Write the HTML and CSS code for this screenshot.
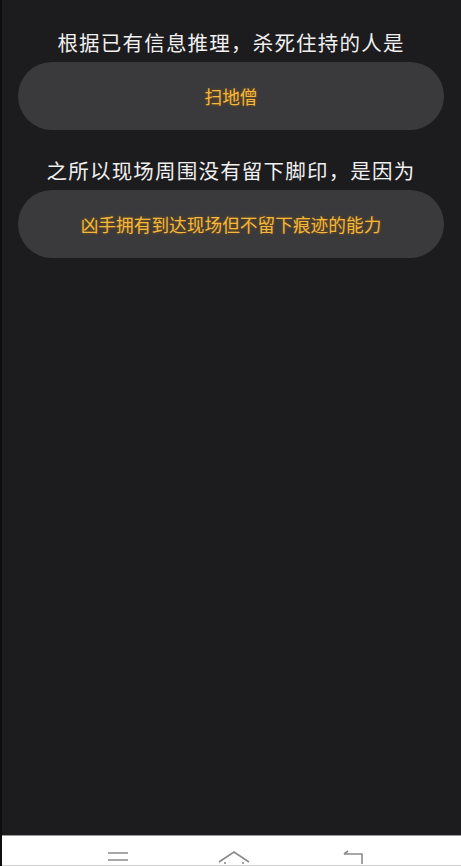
FILE: index.html
```html
<!DOCTYPE html>
<html lang="zh-CN">
<head>
    <meta charset="UTF-8">
    <meta name="viewport" content="width=device-width, initial-scale=1.0">
    <title>推理</title>
    <link rel="stylesheet" href="styles.css">
</head>
<body>

<div class="screen">
    <div class="content">
        <div class="question">根据已有信息推理，杀死住持的人是</div>
        <div class="answer">扫地僧</div>

        <div class="question second">之所以现场周围没有留下脚印，是因为</div>
        <div class="answer">凶手拥有到达现场但不留下痕迹的能力</div>
    </div>

    <div class="nav-bar">
        <svg class="nav-icon menu" width="24" height="14" viewBox="0 0 24 14">
            <path d="M2 3 H22 M2 10 H22" stroke="#8a8a8a" stroke-width="1.6" fill="none"/>
        </svg>
        <svg class="nav-icon home" width="34" height="14" viewBox="0 0 34 14">
            <path d="M2 12 L17 2 L32 12" stroke="#8a8a8a" stroke-width="1.6" fill="none"/>
            <path d="M8 14 V12 M26 14 V12" stroke="#8a8a8a" stroke-width="1.6" fill="none"/>
        </svg>
        <svg class="nav-icon back" width="24" height="14" viewBox="0 0 24 14">
            <path d="M2 4 H20 V14 M2 4 L6 1" stroke="#8a8a8a" stroke-width="1.6" fill="none"/>
        </svg>
    </div>
</div>

</body>
</html>
```

FILE: styles.css
```css
body {
    margin: 0;
    padding: 0;
    background-color: #1c1b1e;
    font-family: "Noto Sans CJK SC", "Noto Sans", sans-serif;
}
.screen {
    height: 866px;
    display: flex;
    flex-direction: column;
    border-left: 2px solid #0e0e0f;
    box-sizing: border-box;
    overflow: hidden;
}
.content {
    flex: 1;
    padding: 22px 17px 0 16px;
}
.question {
    height: 40px;
    line-height: 40px;
    text-align: center;
    color: #f0f0f0;
    font-size: 20.5px;
    letter-spacing: 1.2px;
    white-space: nowrap;
}
.question.second {
    margin-top: 20px;
}
.answer {
    height: 68px;
    border-radius: 34px;
    background-color: #3a3a3c;
    display: flex;
    align-items: center;
    justify-content: center;
    color: #f2b840;
    font-size: 17.7px;
    text-shadow: 0 0 3px rgba(150, 90, 0, 0.9);
}
.nav-bar {
    height: 31px;
    background-color: #ffffff;
    border-top: 1px solid #9a9a9a;
    border-bottom: 1px solid #d0d0d0;
    box-sizing: border-box;
    display: flex;
    align-items: flex-end;
    padding-left: 104px;
}
.nav-icon {
    display: block;
    margin-bottom: 1px;
}
.nav-icon.home {
    margin-left: 87px;
}
.nav-icon.back {
    margin-left: 91px;
}
```
